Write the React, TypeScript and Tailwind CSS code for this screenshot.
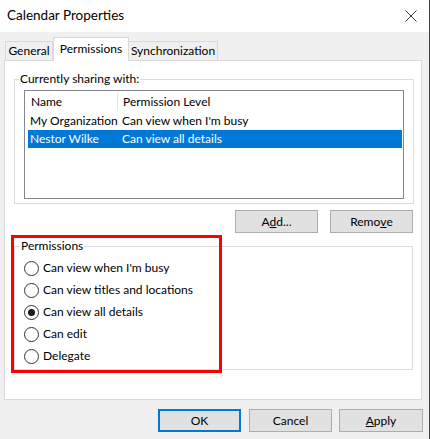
import React from "react";

const shares = [
  { name: "My Organization", level: "Can view when I'm busy", selected: false },
  { name: "Nestor Wilke", level: "Can view all details", selected: true },
];

const levels = [
  { label: "Can view when I'm busy", checked: false },
  { label: "Can view titles and locations", checked: false },
  { label: "Can view all details", checked: true },
  { label: "Can edit", checked: false },
  { label: "Delegate", checked: false },
];

function DlgButton({ children, className, primary }: { children: React.ReactNode; className?: string; primary?: boolean }) {
  return (
    <div
      className={`h-[23px] flex items-center justify-center bg-[#e1e1e1] ${
        primary ? "border-2 border-[#0078d7]" : "border border-[#adadad]"
      } ${className ?? ""}`}
    >
      {children}
    </div>
  );
}

export default function App() {
  return (
    <div className="relative w-[431px] h-[439px] flex bg-white text-[12px] text-black font-['Lato',sans-serif] overflow-hidden">
      <div className="w-[429px] flex flex-col bg-[#f0f0f0]">
        {/* Title bar */}
        <div className="h-[32px] shrink-0 bg-white flex items-center justify-between pl-[7px] pr-[12px]">
          <span className="text-[13.5px] leading-none">Calendar Properties</span>
          <svg width="12" height="12" viewBox="0 0 12 12" className="text-[#333]">
            <path d="M0.5 0.5 L11.5 11.5 M11.5 0.5 L0.5 11.5" stroke="currentColor" strokeWidth="1" fill="none" />
          </svg>
        </div>

        <div className="px-[4px]">
          {/* Tabs */}
          <div className="h-[28px] flex items-end pl-[1px]">
            <div className="w-[48px] h-[19px] flex items-center justify-center border border-b-0 border-[#d9d9d9] bg-[#f0f0f0]">
              General
            </div>
            <div className="relative z-10 -mb-px w-[76px] h-[24px] flex items-center justify-center border border-b-0 border-[#d9d9d9] bg-white pb-[2px]">
              Permissions
            </div>
            <div className="w-[89px] h-[19px] flex items-center justify-center border border-b-0 border-l-0 border-[#d9d9d9] bg-[#f0f0f0]">
              Synchronization
            </div>
          </div>

          {/* Tab panel */}
          <div className="w-[418px] h-[340px] bg-white border border-[#d9d9d9] pt-[10px] pl-[9px]">
            <fieldset className="w-[400px] border border-[#dcdcdc]">
              <legend className="ml-[4px] px-[1px] leading-[16px]">Currently sharing with:</legend>
              <div className="pl-[9px] pt-[3px] pb-[4px]">
                <div className="w-[380px] h-[109px] border border-[#828790] bg-white">
                  <div className="h-[21px] flex items-center">
                    <div className="w-[93px] h-[17px] pl-[6px] flex items-center border-r border-[#e5e5e5]">Name</div>
                    <div className="pl-[5px]">Permission Level</div>
                  </div>
                  {shares.map((s) => (
                    <div
                      key={s.name}
                      className={`h-[18px] ml-[3px] mr-[1px] flex items-center ${s.selected ? "bg-[#0078d7] text-white" : ""}`}
                    >
                      <div className="w-[94px] pl-[2px] whitespace-nowrap">{s.name}</div>
                      <div className="whitespace-nowrap">{s.level}</div>
                    </div>
                  ))}
                </div>
              </div>
            </fieldset>

            <div className="w-[399px] mt-[6px] flex justify-end gap-[12px]">
              <DlgButton className="w-[83px]">
                A<span className="underline">d</span>d...
              </DlgButton>
              <DlgButton className="w-[83px]">
                Remo<span className="underline">v</span>e
              </DlgButton>
            </div>

            <fieldset className="w-[399px] mt-[5px] border border-[#dcdcdc]">
              <legend className="ml-[5px] px-[1px] leading-[16px]">Permissions</legend>
              <div className="pl-[9px] pt-[3px] pb-[2px]">
                {levels.map((l) => (
                  <div key={l.label} className="h-[22px] flex items-center">
                    <div className="w-[15px] h-[15px] rounded-full border border-[#333] bg-white flex items-center justify-center">
                      {l.checked && <div className="w-[7px] h-[7px] rounded-full bg-[#1a1a1a]" />}
                    </div>
                    <span className="ml-[4px]">{l.label}</span>
                  </div>
                ))}
              </div>
            </fieldset>
          </div>
        </div>

        {/* Dialog buttons */}
        <div className="mt-[9px] flex justify-end pr-[6px]">
          <DlgButton primary className="w-[83px]">OK</DlgButton>
          <DlgButton className="w-[83px] ml-[8px]">Cancel</DlgButton>
          <DlgButton className="w-[84px] ml-[7px]">
            <span className="underline">A</span>pply
          </DlgButton>
        </div>
      </div>
      <div className="w-px bg-[#6b2d2d]" />
      <div className="w-px bg-white" />

      {/* Highlight annotation */}
      <div className="absolute left-[11px] top-[235px] w-[211px] h-[138px] border-[3px] border-[#ff0000]" />
    </div>
  );
}
